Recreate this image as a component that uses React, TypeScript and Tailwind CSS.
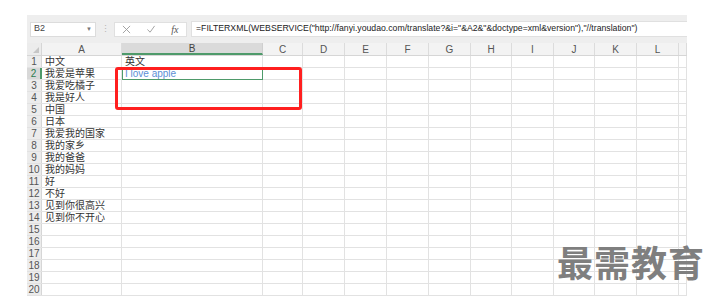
import React from "react";

const cols = [
  { key: "A", w: 80 },
  { key: "B", w: 141 },
  { key: "C", w: 40 },
  { key: "D", w: 42 },
  { key: "E", w: 42 },
  { key: "F", w: 42 },
  { key: "G", w: 42 },
  { key: "H", w: 41 },
  { key: "I", w: 42 },
  { key: "J", w: 41 },
  { key: "K", w: 42 },
  { key: "L", w: 42 },
  { key: "", w: 8 },
];

const colA = [
  "中文",
  "我爱是苹果",
  "我爱吃橘子",
  "我是好人",
  "中国",
  "日本",
  "我爱我的国家",
  "我的家乡",
  "我的爸爸",
  "我的妈妈",
  "好",
  "不好",
  "见到你很高兴",
  "见到你不开心",
];

const font = {
  fontFamily: '"Liberation Sans", "Noto Sans CJK SC", sans-serif',
};

export default function App() {
  const rows = Array.from({ length: 20 }, (_, i) => i + 1);
  return (
    <div className="relative w-[709px] h-[303px] bg-white overflow-hidden" style={font}>
      <div className="pt-[15px] pl-[27px]">
        <div className="w-[660px]">
          {/* Formula bar */}
          <div className="h-[28px] bg-[#eeeeee] flex items-center pl-[3px]">
            <div className="w-[66px] h-[15px] bg-white border border-[#dcdcdc] flex items-center justify-between px-[3px]">
              <span className="text-[9px] text-[#444]">B2</span>
              <span className="text-[6px] text-[#777]">▼</span>
            </div>
            <div className="w-[18px] flex justify-center text-[#b5b5b5] text-[9px] leading-none">⋮</div>
            <div className="w-[73px] h-[15px] bg-white border border-[#e0e0e0] flex items-center justify-around">
              <svg width="9" height="9" viewBox="0 0 10 10">
                <path d="M1 1 L9 9 M9 1 L1 9" stroke="#9a9a9a" strokeWidth="1" />
              </svg>
              <svg width="10" height="9" viewBox="0 0 10 10">
                <path d="M1 5 L4 8 L9 1" stroke="#9a9a9a" strokeWidth="1" fill="none" />
              </svg>
              <span className="text-[10px] italic text-[#555]" style={{ fontFamily: '"Liberation Serif", serif' }}>
                fx
              </span>
            </div>
            <div className="flex-1 ml-[4px] h-[16px] bg-white border-y border-l border-[#e0e0e0] flex items-center pl-[4px]">
              <span className="text-[8.7px] text-[#222] whitespace-nowrap">
                =FILTERXML(WEBSERVICE("http://fanyi.youdao.com/translate?&i="&A2&"&doctype=xml&version"),"//translation")
              </span>
            </div>
          </div>

          {/* Column headers */}
          <div className="flex h-[13px] bg-[#f3f3f3] border-b border-[#d6d6d6]">
            <div className="w-[15px] relative border-r border-[#d6d6d6] bg-[#ececec]">
              <div className="absolute right-[2px] bottom-[2px] w-0 h-0 border-l-[6px] border-l-transparent border-b-[6px] border-b-[#c6c6c6]" />
            </div>
            {cols.map((c) => (
              <div
                key={c.key || "m"}
                className={
                  c.key === "B"
                    ? "flex items-center justify-center text-[10px] text-[#444] bg-[#dadada] border-r border-[#cfcfcf] border-b-2 border-b-[#4e9a6a]"
                    : "flex items-center justify-center text-[10px] text-[#555] border-r border-[#dcdcdc]"
                }
                style={{ width: c.w }}
              >
                {c.key}
              </div>
            ))}
          </div>

          {/* Rows */}
          {rows.map((r) => (
            <div key={r} className="flex h-[12px] border-b border-[#e2e2e2]">
              <div
                className={
                  r === 2
                    ? "w-[15px] bg-[#d8d8d8] border-r-2 border-[#4e9a6a] text-[#2e7d4f] text-[10px] leading-[11px] text-center"
                    : "w-[15px] bg-[#ececec] border-r border-[#d6d6d6] text-[#555] text-[10px] leading-[11px] text-center"
                }
              >
                {r}
              </div>
              {cols.map((c) => {
                const selected = r === 2 && c.key === "B";
                let content: React.ReactNode = null;
                if (c.key === "A" && colA[r - 1]) content = colA[r - 1];
                if (c.key === "B" && r === 1) content = "英文";
                if (selected) content = <span className="text-[#5b8fd6]">I love apple</span>;
                return (
                  <div
                    key={c.key || "m"}
                    className={
                      selected
                        ? "relative border border-[#4e9a6a] -mt-px h-[13px] pl-[2px] text-[10px] leading-[11px] text-[#333] whitespace-nowrap overflow-hidden"
                        : "border-r border-[#e2e2e2] pl-[3px] text-[10px] leading-[11px] text-[#333] whitespace-nowrap overflow-hidden"
                    }
                    style={{ width: c.w }}
                  >
                    {content}
                  </div>
                );
              })}
            </div>
          ))}
        </div>
      </div>

      {/* Red highlight box */}
      <div className="absolute left-[115px] top-[67px] w-[187px] h-[43px] border-[3px] border-[#ff1f1f] rounded-[3px]" />

      {/* Watermark */}
      <div
        className="absolute left-[557px] top-[243px] text-[36px] font-bold text-[#7f7f7f] leading-none tracking-[1px]"
        style={{ fontFamily: '"Noto Sans CJK SC", sans-serif' }}
      >
        最需教育
      </div>
    </div>
  );
}
